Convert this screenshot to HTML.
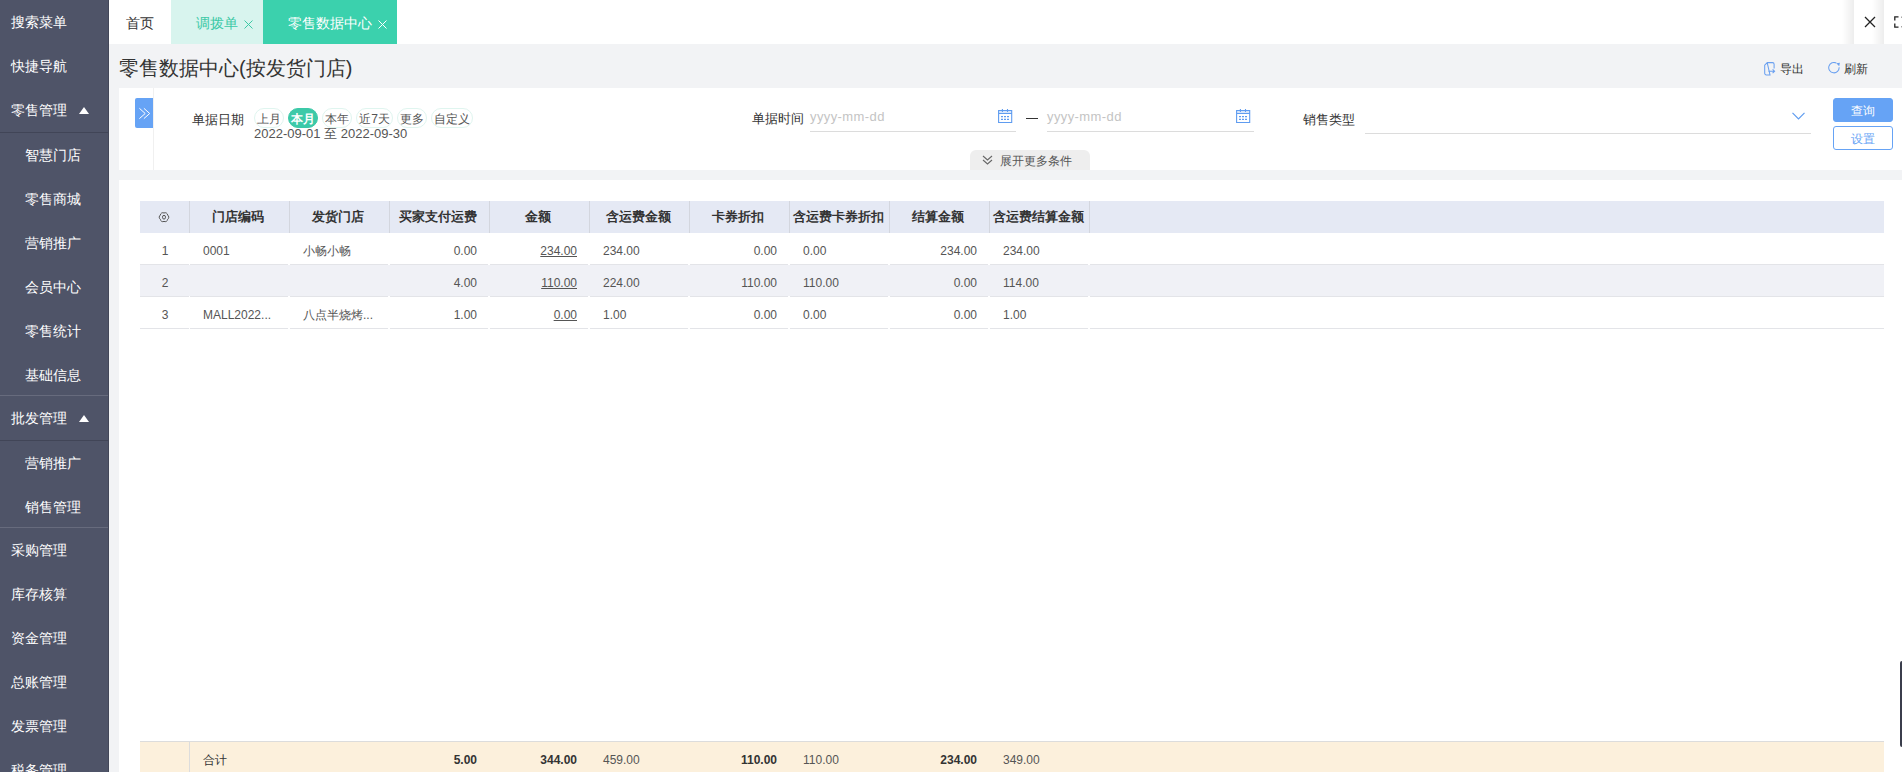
<!DOCTYPE html>
<html><head><meta charset="utf-8">
<style>
*{margin:0;padding:0;box-sizing:border-box}
html,body{width:1902px;height:772px;overflow:hidden;font-family:"Liberation Sans",sans-serif;background:#fff;color:#333}
.abs{position:absolute}
#side{position:absolute;left:0;top:0;width:109px;height:772px;background:#4f5468;border-right:1px solid #434759}
.si{position:absolute;left:0;width:108px;height:44px;line-height:44px;color:#fff;font-size:14px;white-space:nowrap}
.si.l1{padding-left:11px}
.si.l2{padding-left:25px;padding-top:1px}
.sep{position:absolute;left:0;width:108px;height:1px;background:#414557}
.tri{position:absolute;width:0;height:0;border-left:5px solid transparent;border-right:5px solid transparent;border-bottom:7px solid #fff}
#tabs{position:absolute;left:109px;top:0;width:1793px;height:44px;background:#fff}
.tab{position:absolute;top:0;height:44px;line-height:44px;font-size:14px;white-space:nowrap}
#main{position:absolute;left:109px;top:44px;width:1793px;height:728px;background:#f2f3f5}
.lbl{font-size:13px;line-height:16px;color:#333;white-space:nowrap}
.pill{position:absolute;top:20px;width:30px;height:20px;border:1px solid #dff5ef;border-radius:10px;font-size:12px;line-height:21px;text-align:center;color:#555;white-space:nowrap}
.pill.on{background:#3cc9a8;border-color:#3cc9a8;color:#fff;font-weight:bold}
.inp{position:absolute;top:20px;height:24px;border-bottom:1px solid #dcdcdc;font-size:13px;line-height:18px;color:#c4c4c4;letter-spacing:0.4px}
.btn{width:60px;height:24px;border-radius:3px;font-size:12px;line-height:25px;text-align:center}
.th{position:absolute;top:201px;height:32px;line-height:32px;font-size:13px;font-weight:bold;color:#333;text-align:center;white-space:nowrap}
.td{position:absolute;height:32px;line-height:32px;font-size:12px;color:#555;white-space:nowrap}
.td.u span,.td.u{text-decoration:underline}
.td.b{font-weight:bold;color:#333}
</style></head><body>
<div id="side">
  <div class="si l1" style="top:0">搜索菜单</div>
  <div class="si l1" style="top:44px">快捷导航</div>
  <div class="si l1" style="top:88px">零售管理</div>
  <div class="tri" style="left:79px;top:107px"></div>
  <div class="sep" style="top:132px"></div>
  <div class="si l2" style="top:132px">智慧门店</div>
  <div class="si l2" style="top:176px">零售商城</div>
  <div class="si l2" style="top:220px">营销推广</div>
  <div class="si l2" style="top:264px">会员中心</div>
  <div class="si l2" style="top:308px">零售统计</div>
  <div class="si l2" style="top:352px">基础信息</div>
  <div class="sep" style="top:395px;background:#676b7d"></div>
  <div class="si l1" style="top:396px">批发管理</div>
  <div class="tri" style="left:79px;top:415px"></div>
  <div class="sep" style="top:440px"></div>
  <div class="si l2" style="top:440px">营销推广</div>
  <div class="si l2" style="top:484px">销售管理</div>
  <div class="sep" style="top:527px;background:#676b7d"></div>
  <div class="si l1" style="top:528px">采购管理</div>
  <div class="si l1" style="top:572px">库存核算</div>
  <div class="si l1" style="top:616px">资金管理</div>
  <div class="si l1" style="top:660px">总账管理</div>
  <div class="si l1" style="top:704px">发票管理</div>
  <div class="si l1" style="top:748px">税务管理</div>
</div>
<div id="tabs">
  <div class="tab" style="left:17px;top:1px;color:#333">首页</div>
  <div class="tab" style="left:62px;width:92px;background:#d8f4ee"></div>
  <div class="tab" style="left:87px;top:1px;color:#3cc9a6">调拨单</div>
  <svg class="abs" style="left:135px;top:20px" width="9" height="9" viewBox="0 0 9 9"><path d="M0.5 0.5l8 8M8.5 0.5l-8 8" stroke="#3cc9a6" stroke-width="1"/></svg>
  <div class="tab" style="left:154px;width:134px;background:#3bd1ad"></div>
  <div class="tab" style="left:179px;top:1px;color:#fff">零售数据中心</div>
  <svg class="abs" style="left:269px;top:20px" width="9" height="9" viewBox="0 0 9 9"><path d="M0.5 0.5l8 8M8.5 0.5l-8 8" stroke="#fff" stroke-width="1"/></svg>
  <div class="abs" style="left:1733px;top:0;width:12px;height:44px;background:linear-gradient(to right,rgba(0,0,0,0),rgba(0,0,0,0.07))"></div>
  <svg class="abs" style="left:1755px;top:16px" width="12" height="12" viewBox="0 0 12 12"><path d="M1 1l10 10M11 1L1 11" stroke="#222" stroke-width="1.3"/></svg>
  <div class="abs" style="left:1763px;top:0;width:12px;height:44px;background:linear-gradient(to right,rgba(0,0,0,0),rgba(0,0,0,0.07))"></div>
  <svg class="abs" style="left:1785px;top:16px" width="8" height="12" viewBox="0 0 8 12"><path d="M4.5 0.8H0.8V4.5M0.8 7.5V11.2H4.5" fill="none" stroke="#222" stroke-width="1.3"/><path d="M7.5 0.8v0.6M7.5 11.2v-0.6" stroke="#222" stroke-width="1"/></svg>
</div>
<div id="main">
  <div class="abs" style="left:10px;top:13px;font-size:20px;color:#333;white-space:nowrap;line-height:22px">零售数据中心(按发货门店)</div>
  <svg class="abs" style="left:1655px;top:18px" width="12" height="14" viewBox="0 0 12 14"><path d="M3.2 0.6H8.5a1.6 1.6 0 0 1 1.6 1.6V6.6M6 12.9H2.3A1.6 1.6 0 0 1 0.7 11.3V3.2L3.2 0.6z" fill="none" stroke="#6aa0f0" stroke-width="1.05"/><path d="M4.5 9.2H10.6M8.6 7.3L10.6 9.2 8.6 11.1" fill="none" stroke="#6aa0f0" stroke-width="1.05"/></svg>
  <div class="abs" style="left:1671px;top:17px;font-size:12px;line-height:16px;color:#333">导出</div>
  <svg class="abs" style="left:1719px;top:18px" width="13" height="13" viewBox="0 0 13 13"><path d="M11.1 5.2A5.2 5.2 0 1 1 8.4 1.1" fill="none" stroke="#6aa0f0" stroke-width="1.05"/><path d="M8.3 1.2L11.9 0.7 11.2 4.3z" fill="#6aa0f0"/></svg>
  <div class="abs" style="left:1735px;top:17px;font-size:12px;line-height:16px;color:#333">刷新</div>

  <!-- filter panel -->
  <div class="abs" style="left:10px;top:44px;width:1783px;height:82px;background:#fff">
    <div class="abs" style="left:16px;top:10px;width:18px;height:30px;background:#66a3f5;border-radius:2px 0 0 2px"></div>
    <svg class="abs" style="left:19px;top:19px" width="13" height="13" viewBox="0 0 13 13"><path d="M1.4 1.3L7.2 6.5 1.4 11.6M5.9 1.3L11.7 6.5 5.9 11.6" fill="none" stroke="#fff" stroke-width="1"/></svg>
    <div class="abs" style="left:34px;top:0;width:1px;height:82px;background:#f0f0f0"></div>
    <div class="abs lbl" style="left:73px;top:24px">单据日期</div>
    <div class="pill" style="left:135px">上月</div>
    <div class="pill on" style="left:169px">本月</div>
    <div class="pill" style="left:203px">本年</div>
    <div class="pill" style="left:237px;width:37px">近7天</div>
    <div class="pill" style="left:278px">更多</div>
    <div class="pill" style="left:312px;width:42px">自定义</div>
    <div class="abs" style="left:135px;top:39px;font-size:13px;line-height:14px;color:#555;white-space:nowrap">2022-09-01 至 2022-09-30</div>

    <div class="abs lbl" style="left:633px;top:23px;font-size:12.5px">单据时间</div>
    <div class="inp" style="left:691px;width:206px"><span>yyyy-mm-dd</span></div>
    <svg class="abs cal" style="left:879px;top:20px" width="15" height="15" viewBox="0 0 15 15"><path d="M0.6 2.6h13.1v12h-13.1z M0.6 5.4h13.1" fill="none" stroke="#5f9cf0" stroke-width="1.1"/><path d="M4.4 1v3M9.5 1v3" stroke="#5f9cf0" stroke-width="1.1"/><path d="M3 8.6h2M6 8.6h2M9 8.6h2M3 11.4h2M6 11.4h2M9 11.4h2" stroke="#5f9cf0" stroke-width="1.1"/></svg>
    <div class="abs" style="left:907px;top:30px;width:12px;height:1px;background:#333"></div>
    <div class="inp" style="left:928px;width:207px"><span>yyyy-mm-dd</span></div>
    <svg class="abs cal" style="left:1117px;top:20px" width="15" height="15" viewBox="0 0 15 15"><path d="M0.6 2.6h13.1v12h-13.1z M0.6 5.4h13.1" fill="none" stroke="#5f9cf0" stroke-width="1.1"/><path d="M4.4 1v3M9.5 1v3" stroke="#5f9cf0" stroke-width="1.1"/><path d="M3 8.6h2M6 8.6h2M9 8.6h2M3 11.4h2M6 11.4h2M9 11.4h2" stroke="#5f9cf0" stroke-width="1.1"/></svg>

    <div class="abs lbl" style="left:1184px;top:24px">销售类型</div>
    <div class="abs" style="left:1246px;top:45px;width:446px;height:1px;background:#dcdcdc"></div>
    <svg class="abs" style="left:1673px;top:24px" width="13" height="8" viewBox="0 0 13 8"><path d="M0.5 0.8l6 6 6-6" fill="none" stroke="#5f9cf0" stroke-width="1.2"/></svg>
    <div class="abs btn" style="left:1714px;top:10px;background:#66a3f5;color:#fff;border:1px solid #66a3f5">查询</div>
    <div class="abs btn" style="left:1714px;top:38px;background:#fff;color:#66a3f5;border:1px solid #66a3f5">设置</div>

    <div class="abs" style="left:851px;top:62px;width:120px;height:20px;background:#eeeeee;border-radius:6px 6px 0 0"></div>
    <svg class="abs" style="left:863px;top:67px" width="11" height="10" viewBox="0 0 11 10"><path d="M1 1l4.5 4 4.5-4M1 5l4.5 4 4.5-4" fill="none" stroke="#666" stroke-width="1.1"/></svg>
    <div class="abs" style="left:881px;top:65px;font-size:12px;line-height:16px;color:#555;white-space:nowrap">展开更多条件</div>
  </div>

  <!-- content panel -->
  <div class="abs" style="left:10px;top:136px;width:1783px;height:592px;background:#fff"></div>
</div>
<div class="abs" style="left:140px;top:201px;width:1744px;height:32px;background:#e5e9f4"></div>
<div class="abs" style="left:189px;top:201px;width:1px;height:32px;background:#d3d6de"></div>
<div class="abs" style="left:289px;top:201px;width:1px;height:32px;background:#d3d6de"></div>
<div class="abs" style="left:389px;top:201px;width:1px;height:32px;background:#d3d6de"></div>
<div class="abs" style="left:489px;top:201px;width:1px;height:32px;background:#d3d6de"></div>
<div class="abs" style="left:589px;top:201px;width:1px;height:32px;background:#d3d6de"></div>
<div class="abs" style="left:689px;top:201px;width:1px;height:32px;background:#d3d6de"></div>
<div class="abs" style="left:789px;top:201px;width:1px;height:32px;background:#d3d6de"></div>
<div class="abs" style="left:889px;top:201px;width:1px;height:32px;background:#d3d6de"></div>
<div class="abs" style="left:989px;top:201px;width:1px;height:32px;background:#d3d6de"></div>
<div class="abs" style="left:1089px;top:201px;width:1px;height:32px;background:#d3d6de"></div>
<svg class="abs" style="left:157px;top:211px" width="14" height="13" viewBox="0 0 14 13"><path d="M10.64 8.30 A2.5 2.5 0 0 1 7.00 10.40 A2.5 2.5 0 0 1 3.36 8.30 A2.5 2.5 0 0 1 3.36 4.10 A2.5 2.5 0 0 1 7.00 2.00 A2.5 2.5 0 0 1 10.64 4.10 A2.5 2.5 0 0 1 10.64 8.30z" fill="none" stroke="#555" stroke-width="1"/><ellipse cx="7" cy="6.2" rx="1.5" ry="1.9" fill="none" stroke="#555" stroke-width="1"/></svg>
<div class="th" style="left:190px;width:96px">门店编码</div>
<div class="th" style="left:290px;width:96px">发货门店</div>
<div class="th" style="left:390px;width:96px">买家支付运费</div>
<div class="th" style="left:490px;width:96px">金额</div>
<div class="th" style="left:590px;width:96px">含运费金额</div>
<div class="th" style="left:690px;width:96px">卡券折扣</div>
<div class="th" style="left:790px;width:96px">含运费卡券折扣</div>
<div class="th" style="left:890px;width:96px">结算金额</div>
<div class="th" style="left:990px;width:96px">含运费结算金额</div>
<div class="abs" style="left:140px;top:233px;width:1744px;height:31px;background:#fff"></div>
<div class="abs" style="left:140px;top:264px;width:49px;height:1px;background:#e3e4e8"></div>
<div class="abs" style="left:190px;top:264px;width:98px;height:1px;background:#e3e4e8"></div>
<div class="abs" style="left:290px;top:264px;width:98px;height:1px;background:#e3e4e8"></div>
<div class="abs" style="left:390px;top:264px;width:98px;height:1px;background:#e3e4e8"></div>
<div class="abs" style="left:490px;top:264px;width:98px;height:1px;background:#e3e4e8"></div>
<div class="abs" style="left:590px;top:264px;width:98px;height:1px;background:#e3e4e8"></div>
<div class="abs" style="left:690px;top:264px;width:98px;height:1px;background:#e3e4e8"></div>
<div class="abs" style="left:790px;top:264px;width:98px;height:1px;background:#e3e4e8"></div>
<div class="abs" style="left:890px;top:264px;width:98px;height:1px;background:#e3e4e8"></div>
<div class="abs" style="left:990px;top:264px;width:98px;height:1px;background:#e3e4e8"></div>
<div class="abs" style="left:1090px;top:264px;width:794px;height:1px;background:#e3e4e8"></div>
<div class="td" style="left:140px;top:235px;width:50px;text-align:center">1</div>
<div class="td" style="left:203px;top:235px;width:87px">0001</div>
<div class="td" style="left:303px;top:235px;width:87px">小畅小畅</div>
<div class="td" style="left:390px;top:235px;width:87px;text-align:right">0.00</div>
<div class="td u" style="left:490px;top:235px;width:87px;text-align:right">234.00</div>
<div class="td" style="left:603px;top:235px;width:87px">234.00</div>
<div class="td" style="left:690px;top:235px;width:87px;text-align:right">0.00</div>
<div class="td" style="left:803px;top:235px;width:87px">0.00</div>
<div class="td" style="left:890px;top:235px;width:87px;text-align:right">234.00</div>
<div class="td" style="left:1003px;top:235px;width:87px">234.00</div>
<div class="abs" style="left:140px;top:265px;width:1744px;height:31px;background:#f0f1f6"></div>
<div class="abs" style="left:140px;top:296px;width:49px;height:1px;background:#e3e4e8"></div>
<div class="abs" style="left:190px;top:296px;width:98px;height:1px;background:#e3e4e8"></div>
<div class="abs" style="left:290px;top:296px;width:98px;height:1px;background:#e3e4e8"></div>
<div class="abs" style="left:390px;top:296px;width:98px;height:1px;background:#e3e4e8"></div>
<div class="abs" style="left:490px;top:296px;width:98px;height:1px;background:#e3e4e8"></div>
<div class="abs" style="left:590px;top:296px;width:98px;height:1px;background:#e3e4e8"></div>
<div class="abs" style="left:690px;top:296px;width:98px;height:1px;background:#e3e4e8"></div>
<div class="abs" style="left:790px;top:296px;width:98px;height:1px;background:#e3e4e8"></div>
<div class="abs" style="left:890px;top:296px;width:98px;height:1px;background:#e3e4e8"></div>
<div class="abs" style="left:990px;top:296px;width:98px;height:1px;background:#e3e4e8"></div>
<div class="abs" style="left:1090px;top:296px;width:794px;height:1px;background:#e3e4e8"></div>
<div class="td" style="left:140px;top:267px;width:50px;text-align:center">2</div>
<div class="td" style="left:390px;top:267px;width:87px;text-align:right">4.00</div>
<div class="td u" style="left:490px;top:267px;width:87px;text-align:right">110.00</div>
<div class="td" style="left:603px;top:267px;width:87px">224.00</div>
<div class="td" style="left:690px;top:267px;width:87px;text-align:right">110.00</div>
<div class="td" style="left:803px;top:267px;width:87px">110.00</div>
<div class="td" style="left:890px;top:267px;width:87px;text-align:right">0.00</div>
<div class="td" style="left:1003px;top:267px;width:87px">114.00</div>
<div class="abs" style="left:140px;top:297px;width:1744px;height:31px;background:#fff"></div>
<div class="abs" style="left:140px;top:328px;width:49px;height:1px;background:#e3e4e8"></div>
<div class="abs" style="left:190px;top:328px;width:98px;height:1px;background:#e3e4e8"></div>
<div class="abs" style="left:290px;top:328px;width:98px;height:1px;background:#e3e4e8"></div>
<div class="abs" style="left:390px;top:328px;width:98px;height:1px;background:#e3e4e8"></div>
<div class="abs" style="left:490px;top:328px;width:98px;height:1px;background:#e3e4e8"></div>
<div class="abs" style="left:590px;top:328px;width:98px;height:1px;background:#e3e4e8"></div>
<div class="abs" style="left:690px;top:328px;width:98px;height:1px;background:#e3e4e8"></div>
<div class="abs" style="left:790px;top:328px;width:98px;height:1px;background:#e3e4e8"></div>
<div class="abs" style="left:890px;top:328px;width:98px;height:1px;background:#e3e4e8"></div>
<div class="abs" style="left:990px;top:328px;width:98px;height:1px;background:#e3e4e8"></div>
<div class="abs" style="left:1090px;top:328px;width:794px;height:1px;background:#e3e4e8"></div>
<div class="td" style="left:140px;top:299px;width:50px;text-align:center">3</div>
<div class="td" style="left:203px;top:299px;width:87px">MALL2022...</div>
<div class="td" style="left:303px;top:299px;width:87px">八点半烧烤...</div>
<div class="td" style="left:390px;top:299px;width:87px;text-align:right">1.00</div>
<div class="td u" style="left:490px;top:299px;width:87px;text-align:right">0.00</div>
<div class="td" style="left:603px;top:299px;width:87px">1.00</div>
<div class="td" style="left:690px;top:299px;width:87px;text-align:right">0.00</div>
<div class="td" style="left:803px;top:299px;width:87px">0.00</div>
<div class="td" style="left:890px;top:299px;width:87px;text-align:right">0.00</div>
<div class="td" style="left:1003px;top:299px;width:87px">1.00</div>
<div class="abs" style="left:140px;top:741px;width:1744px;height:1px;background:#dcdcdc"></div>
<div class="abs" style="left:140px;top:742px;width:1744px;height:30px;background:#fcf0dc"></div>
<div class="abs" style="left:189px;top:742px;width:1px;height:30px;background:#dcdcdc"></div>
<div class="td" style="left:203px;top:744px;width:87px;color:#333">合计</div>
<div class="td b" style="left:390px;top:744px;width:87px;text-align:right">5.00</div>
<div class="td b" style="left:490px;top:744px;width:87px;text-align:right">344.00</div>
<div class="td" style="left:603px;top:744px;width:87px">459.00</div>
<div class="td b" style="left:690px;top:744px;width:87px;text-align:right">110.00</div>
<div class="td" style="left:803px;top:744px;width:87px">110.00</div>
<div class="td b" style="left:890px;top:744px;width:87px;text-align:right">234.00</div>
<div class="td" style="left:1003px;top:744px;width:87px">349.00</div>
<div class="abs" style="left:1900px;top:661px;width:2px;height:86px;background:#3b3e4c;border-radius:2px 0 0 2px"></div>
</body></html>
